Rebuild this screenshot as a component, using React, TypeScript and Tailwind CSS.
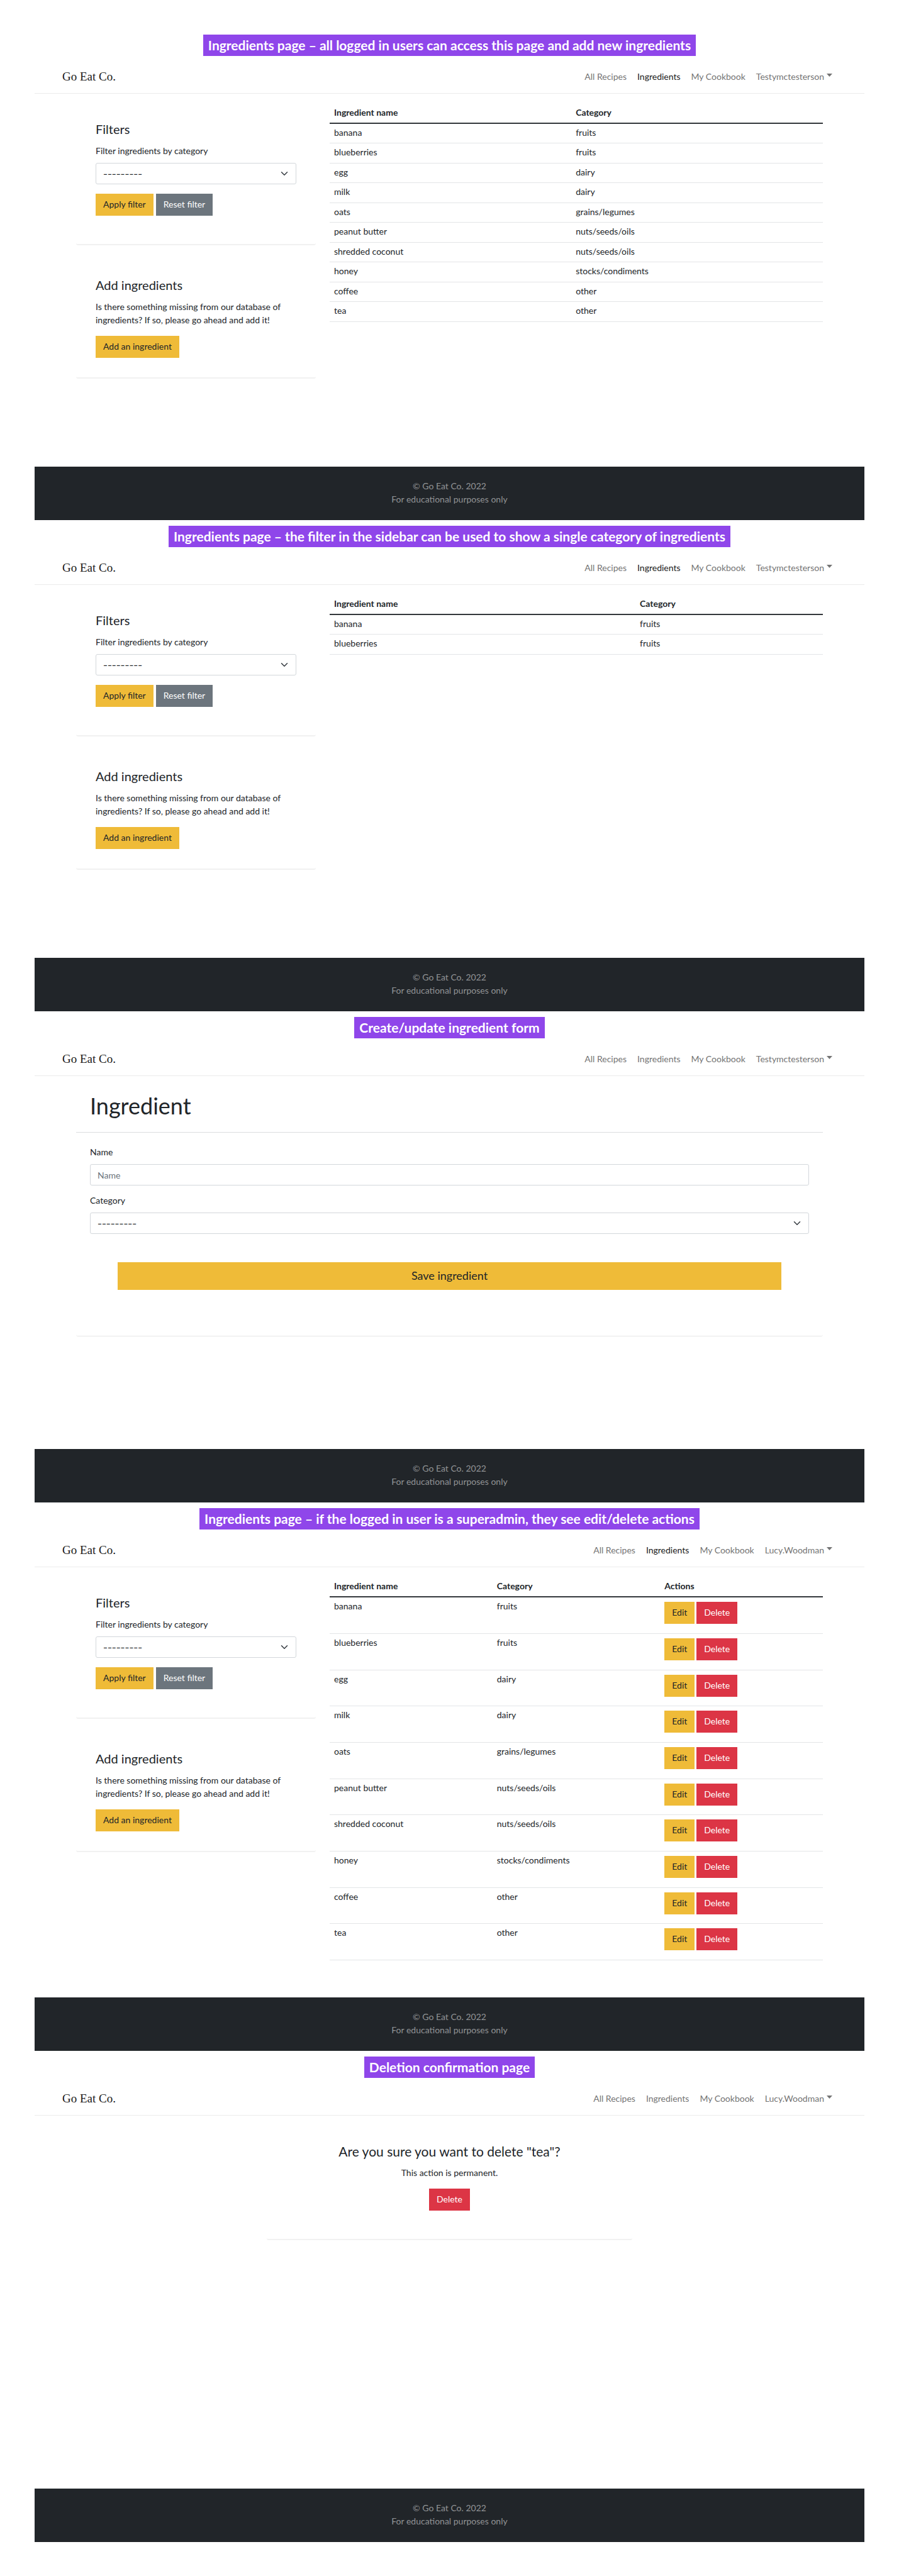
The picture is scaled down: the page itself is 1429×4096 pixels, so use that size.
import React, { useId } from "react";

type Ingredient = { name: string; category: string };

const INGREDIENTS: Ingredient[] = [
  { name: "banana", category: "fruits" },
  { name: "blueberries", category: "fruits" },
  { name: "egg", category: "dairy" },
  { name: "milk", category: "dairy" },
  { name: "oats", category: "grains/legumes" },
  { name: "peanut butter", category: "nuts/seeds/oils" },
  { name: "shredded coconut", category: "nuts/seeds/oils" },
  { name: "honey", category: "stocks/condiments" },
  { name: "coffee", category: "other" },
  { name: "tea", category: "other" },
];

const BUTTON = "h-[35px] px-3 pb-[2px] text-center whitespace-nowrap";
const YELLOW = "bg-[#efbb38] text-[#212529]";
const GRAY = "bg-[#6c757d] text-white";
const RED = "bg-[#dc3545] text-white";

function Navbar({ user, active }: { user: string; active: boolean }) {
  return (
    <nav className="mt-2 flex h-[52px] items-center justify-between border-b border-[#ececec] pr-[51px] pb-[2px] pl-[44px]">
      <a href="#" className="font-['Liberation_Serif',serif] text-[19px] leading-6 text-[#1a1a1a]">
        Go Eat Co.
      </a>
      <div className="flex items-center gap-[17px] text-[#747474]">
        <a href="#">All Recipes</a>
        <a href="#" className={active ? "text-[#1a1a1a]" : ""}>
          Ingredients
        </a>
        <a href="#">My Cookbook</a>
        <button type="button" className="flex items-center gap-1">
          {user}
          <svg width="9" height="5" viewBox="0 0 9 5" fill="currentColor" className="-mt-1" aria-hidden="true">
            <path d="M0 0h9L4.500 5z" />
          </svg>
        </button>
      </div>
    </nav>
  );
}

function Footer() {
  return (
    <footer className="flex h-[85px] flex-col items-center justify-center bg-[#212529] pb-[3px] text-[#919395]">
      <p>© Go Eat Co. 2022</p>
      <p>For educational purposes only</p>
    </footer>
  );
}

type ScreenProps = {
  caption: string;
  user: string;
  active?: boolean;
  children: React.ReactNode;
};

function Screen({ caption, user, active = false, children }: ScreenProps) {
  return (
    <section className="flex flex-col">
      <h2 className="flex h-[34px] items-center self-center bg-[#8f46ea] px-2 text-[21px] leading-[34px] font-bold whitespace-nowrap text-white">
        {caption}
      </h2>
      <Navbar user={user} active={active} />
      <main className="min-h-[593px] px-[66px]">{children}</main>
      <Footer />
    </section>
  );
}

function CategorySelect({ id }: { id: string }) {
  return (
    <div className="relative">
      <select
        id={id}
        className="block h-[34px] w-full appearance-none rounded-[3px] border border-[#d3d7db] bg-white pr-8 pl-[11px] font-[Inter,sans-serif] text-[15px]"
      >
        <option>---------</option>
      </select>
      <svg
        width="12"
        height="12"
        viewBox="0 0 16 16"
        fill="none"
        stroke="#343a40"
        strokeWidth="2"
        strokeLinecap="round"
        strokeLinejoin="round"
        className="pointer-events-none absolute top-[11px] right-[13px]"
        aria-hidden="true"
      >
        <path d="m2 5 6 6 6-6" />
      </svg>
    </div>
  );
}

function Sidebar() {
  const id = useId();
  return (
    <aside>
      <div className="rounded-[3px] border-b-2 border-[#f1f1f1] px-[31px] pt-[44px] pb-[45px]">
        <h3 className="text-[20px] leading-[25px]">Filters</h3>
        <label htmlFor={id} className="mt-[11px] mb-[9px] block">
          Filter ingredients by category
        </label>
        <CategorySelect id={id} />
        <div className="mt-[15px] flex gap-[4px]">
          <button type="button" className={`${BUTTON} ${YELLOW}`}>
            Apply filter
          </button>
          <button type="button" className={`${BUTTON} ${GRAY}`}>
            Reset filter
          </button>
        </div>
      </div>
      <div className="mt-[7px] rounded-[3px] border-b-2 border-[#f1f1f1] px-[31px] pt-[44px] pb-[31px]">
        <h3 className="text-[20px] leading-[25px]">Add ingredients</h3>
        <p className="mt-[11px] mb-[15px]">
          Is there something missing from our database of ingredients? If so, please go ahead and add it!
        </p>
        <button type="button" className={`${BUTTON} ${YELLOW}`}>
          Add an ingredient
        </button>
      </div>
    </aside>
  );
}

type TableProps = { rows: Ingredient[]; columns: string[]; actions?: boolean };

function IngredientTable({ rows, columns, actions = false }: TableProps) {
  const rowHeight = actions ? "h-[58px] nth-[3n]:h-[57px]" : "h-[31px] even:h-[32px]";
  return (
    <table className="mt-[15px] w-full table-fixed border-separate border-spacing-0 self-start text-left">
      <colgroup>
        {columns.map((width, i) => (
          <col key={i} className={width} />
        ))}
      </colgroup>
      <thead>
        <tr className="h-[33px] [&>th]:border-b-2 [&>th]:border-[#33373b] [&>th]:px-[7px] [&>th]:pb-[2px] [&>th]:font-bold">
          <th scope="col">Ingredient name</th>
          <th scope="col">Category</th>
          {actions && <th scope="col">Actions</th>}
        </tr>
      </thead>
      <tbody>
        {rows.map((row) => (
          <tr
            key={row.name}
            className={`${rowHeight} [&>td]:border-b [&>td]:border-[#e3e5e7] [&>td]:px-[7px] [&>td]:pt-[3px] [&>td]:align-top`}
          >
            <td>{row.name}</td>
            <td>{row.category}</td>
            {actions && (
              <td>
                <div className="mt-[4px] mb-[14px] flex gap-[3px]">
                  <button type="button" className={`${BUTTON} ${YELLOW}`}>
                    Edit
                  </button>
                  <button type="button" className={`${BUTTON} ${RED}`}>
                    Delete
                  </button>
                </div>
              </td>
            )}
          </tr>
        ))}
      </tbody>
    </table>
  );
}

function IngredientsPage(props: TableProps) {
  return (
    <div className={`grid grid-cols-[381fr_784fr] gap-[22px] ${props.actions ? "pb-[59px]" : ""}`}>
      <Sidebar />
      <IngredientTable {...props} />
    </div>
  );
}

function IngredientForm() {
  const nameId = useId();
  const categoryId = useId();
  return (
    <form className="rounded-[3px] border-b border-[#e6e6e6] pb-[73px]">
      <div className="flex h-[90px] items-center border-b border-[#dcdddf] px-[22px] pt-1">
        <h1 className="text-[36px] leading-[44px]">Ingredient</h1>
      </div>
      <div className="px-[22px] pt-5">
        <label htmlFor={nameId} className="mb-[9px] block">
          Name
        </label>
        <input
          id={nameId}
          type="text"
          placeholder="Name"
          className="block h-[34px] w-full rounded-[3px] border border-[#d3d7db] px-[11px] placeholder:text-[#6c757d]"
        />
        <label htmlFor={categoryId} className="mt-[13px] mb-[9px] block">
          Category
        </label>
        <CategorySelect id={categoryId} />
      </div>
      <div className="mt-[45px] px-[66px]">
        <button type="button" className="block h-[44px] w-full bg-[#efbb38] pb-[2px] text-center text-[18px]">
          Save ingredient
        </button>
      </div>
    </form>
  );
}

function DeleteConfirmation() {
  return (
    <div className="mx-auto flex w-[49%] flex-col items-center rounded-[3px] border-b-2 border-[#f1f1f1] pt-[44px] pb-[45px]">
      <h3 className="text-[21px] leading-[25px]">Are you sure you want to delete "tea"?</h3>
      <p className="mt-[11px] mb-[15px]">This action is permanent.</p>
      <button type="button" className={`${BUTTON} ${RED}`}>
        Delete
      </button>
    </div>
  );
}

export default function App() {
  return (
    <div className="flex flex-col gap-[9px] bg-white px-[55px] pt-[55px] pb-[54px] font-[Lato,sans-serif] text-[14px] leading-[21px] text-[#212529]">
      <Screen
        caption="Ingredients page – all logged in users can access this page and add new ingredients"
        user="Testymctesterson"
        active
      >
        <IngredientsPage rows={INGREDIENTS} columns={["w-[49%]", "w-[51%]"]} />
      </Screen>
      <Screen
        caption="Ingredients page – the filter in the sidebar can be used to show a single category of ingredients"
        user="Testymctesterson"
        active
      >
        <IngredientsPage rows={INGREDIENTS.slice(0, 2)} columns={["w-[62%]", "w-[38%]"]} />
      </Screen>
      <Screen caption="Create/update ingredient form" user="Testymctesterson">
        <IngredientForm />
      </Screen>
      <Screen
        caption="Ingredients page – if the logged in user is a superadmin, they see edit/delete actions"
        user="Lucy.Woodman"
        active
      >
        <IngredientsPage rows={INGREDIENTS} columns={["w-[33%]", "w-[34%]", "w-[33%]"]} actions />
      </Screen>
      <Screen caption="Deletion confirmation page" user="Lucy.Woodman">
        <DeleteConfirmation />
      </Screen>
    </div>
  );
}
